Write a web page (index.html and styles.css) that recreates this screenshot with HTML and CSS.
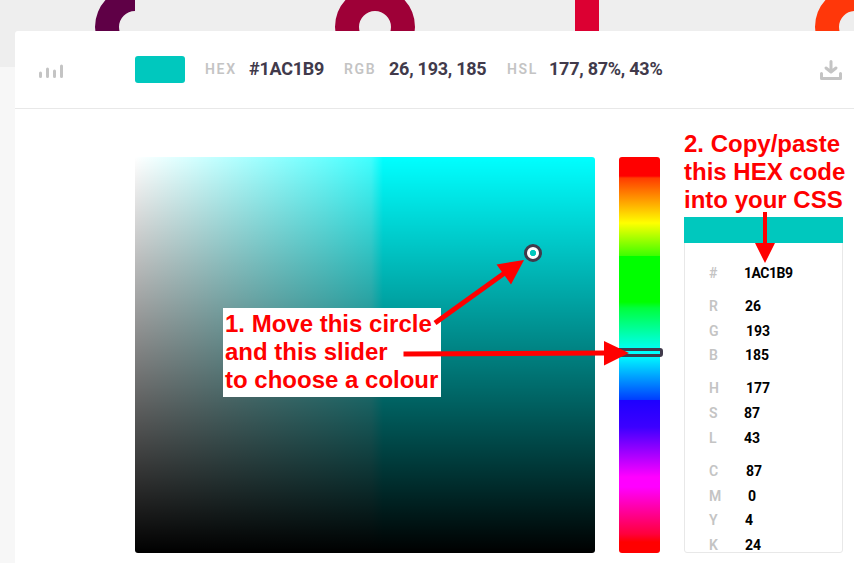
FILE: index.html
```html
<!DOCTYPE html>
<html lang="en">
<head>
<meta charset="utf-8">
<title>Colour picker</title>
<link rel="stylesheet" href="styles.css">
</head>
<body>
<div class="banner">
  <svg width="854" height="67" viewBox="0 0 854 67">
    <path d="M135-13A40 40 0 0 0 135 67V43A16 16 0 0 1 135 11Z" fill="#5f0046"/>
    <circle cx="375" cy="27" r="28" fill="none" stroke="#9e0037" stroke-width="24"/>
    <path d="M575 0H599V67H575Z" fill="#dc0032"/>
    <circle cx="855" cy="27" r="28" fill="none" stroke="#ff370a" stroke-width="24"/>
  </svg>
</div>
<main class="card">
  <header class="bar">
    <svg class="levels" width="26" height="16" viewBox="0 0 26 16" fill="none" stroke="#c4c4c4" stroke-width="3" stroke-linecap="round"><path d="M1.500 9V12.500M8.500 5V12.500M15.500 7V12.500M22.500 2V12.500"/></svg>
    <span class="swatch"></span>
    <span class="label hex">HEX</span><b class="value hexv">#1AC1B9</b>
    <span class="label rgb">RGB</span><b class="value rgbv">26, 193, 185</b>
    <span class="label hsl">HSL</span><b class="value hslv">177, 87%, 43%</b>
    <svg class="download" width="22" height="20" viewBox="0 0 22 20" fill="none" stroke="#c4c4c4" stroke-width="3" stroke-linecap="round" stroke-linejoin="round"><path d="M1.500 13.500V18.500H20.500V13.500M6 8L11 12L16 8M11 11V1.500"/></svg>
  </header>
  <section class="work">
    <div class="field">
      <span class="handle"></span>
      <p class="note step-one">1. Move this circle<br>and this slider<br>to choose a colour</p>
    </div>
    <div class="hue"><span class="slider"></span></div>
    <aside class="side">
      <p class="note step-two">2. Copy/paste<br>this HEX code<br>into your CSS</p>
      <div class="codes">
        <div class="chip"></div>
        <dl>
          <div class="row"><dt>#</dt><dd class="code">1AC1B9</dd></div>
          <div class="row first"><dt>R</dt><dd>26</dd></div>
          <div class="row"><dt>G</dt><dd class="in1">193</dd></div>
          <div class="row"><dt>B</dt><dd>185</dd></div>
          <div class="row first"><dt>H</dt><dd class="in1">177</dd></div>
          <div class="row"><dt>S</dt><dd class="out1">87</dd></div>
          <div class="row"><dt>L</dt><dd class="out1">43</dd></div>
          <div class="row first"><dt>C</dt><dd class="in1">87</dd></div>
          <div class="row"><dt>M</dt><dd class="in3">0</dd></div>
          <div class="row"><dt>Y</dt><dd>4</dd></div>
          <div class="row"><dt>K</dt><dd>24</dd></div>
        </dl>
      </div>
    </aside>
  </section>
</main>
<svg class="arrows" width="854" height="563" viewBox="0 0 854 563" fill="red" stroke="none">
  <path d="M435 323L506 272" stroke="red" stroke-width="5"/>
  <path d="M524 260L496.500 264.500L511 284.500Z"/>
  <path d="M403.500 354L606 353" stroke="red" stroke-width="5"/>
  <path d="M604 341L629 353L604 365.500Z"/>
  <path d="M763 212H767V243H775L765 263L755 243H763Z"/>
</svg>
</body>
</html>
```
FILE: styles.css
```css
* { box-sizing: border-box; }
body {
  margin: 0;
  height: 563px;
  overflow: hidden;
  position: relative;
  background: #f7f7f7;
  font-family: Roboto, "Liberation Sans", sans-serif;
}
.banner { height: 67px; background: #eee; }
.banner svg { display: block; }
.card {
  position: relative;
  height: 540px;
  margin: -36px 0 0 15px;
  background: #fff;
  border-radius: 3px 0 0 0;
}
.bar {
  display: flex;
  align-items: center;
  height: 78px;
  padding: 0 12px 0 24px;
  border-bottom: 1px solid #e8e8e8;
  white-space: nowrap;
}
.levels { margin-top: 4px; flex: none; }
.swatch {
  width: 50px;
  height: 27px;
  margin-left: 70px;
  border-radius: 3px;
  background: #00c8be;
  flex: none;
}
.label { margin: 0 0 1px 20px; font-size: 14px; font-weight: 600; letter-spacing: 1.7px; color: #c4c4c4; flex: none; }
.value { margin-bottom: 2px; font-size: 18px; font-weight: 700; letter-spacing: -0.25px; color: #413a4b; flex: none; }
.hex { width: 44px; }
.hexv { width: 75px; }
.rgb { width: 45px; }
.rgbv { width: 98px; }
.hsl { width: 42px; }
.download { margin-left: auto; flex: none; }
.work { display: flex; padding: 48px 0 0 120px; }
.field {
  position: relative;
  width: 460px;
  height: 396px;
  border-radius: 3px;
  background:
    linear-gradient(to bottom, transparent, #000),
    linear-gradient(to right, #fff 0, rgba(255,255,255,.84) 55px, rgba(255,255,255,.62) 125px, rgba(255,255,255,.38) 200px, rgba(255,255,255,.25) 236px, transparent 248px),
    #0ff;
}
.handle {
  position: absolute;
  left: 389px;
  top: 87px;
  width: 18px;
  height: 18px;
  border: 3px solid #413a4b;
  border-radius: 50%;
  background: radial-gradient(circle, #00c8be 2.800px, #fff 3.500px);
}
.note {
  margin: 0;
  font: bold 24px/28px "Liberation Sans", Arial, sans-serif;
  color: red;
  white-space: nowrap;
}
.step-one {
  position: absolute;
  left: 88px;
  top: 151px;
  width: 218px;
  height: 89px;
  padding: 2px;
  background: #fff;
}
.hue {
  position: relative;
  width: 41px;
  height: 396px;
  margin-left: 24px;
  border-radius: 3px;
  background: linear-gradient(to bottom,
    #f00 19px, #ff3c00 21px, #ff0 66px, #3cff00 99px, #0f0 99px,
    #0f0 145px, #00ff3c 151px, #0ff 195px, #0ff 198px, #003cff 243px, #1e00ff 243px,
    #3c00ff 270px, #f0f 320px, #f0f 330px, #ff003c 377px, #f00 385px);
}
.slider {
  position: absolute;
  left: -3px;
  top: 191px;
  width: 47px;
  height: 9px;
  border: 3px solid #413a4b;
  border-radius: 3px;
}
.side { width: 161px; margin: -27px 0 0 24px; }
.step-two { height: 87px; }
.codes { width: 159px; height: 336px; border: 1px solid #e8e8e8; border-radius: 0 0 3px 3px; }
.chip { height: 26px; margin: -1px -1px 0; background: #00c8be; }
dl { margin: 0; padding: 17.500px 0 0 24px; }
.row { display: flex; height: 24.750px; align-items: center; font-size: 14px; }
.first { margin-top: 8.250px; }
dt { width: 36px; font-weight: 600; color: #c4c4c4; }
dd { margin: 0; font-weight: 700; color: #000; }
.code { margin-left: -1px; letter-spacing: -0.5px; }
.in1 { padding-left: 1px; }
.in3 { padding-left: 3px; }
.out1 { margin-left: -1px; }
.arrows { position: absolute; left: 0; top: 0; }
```
